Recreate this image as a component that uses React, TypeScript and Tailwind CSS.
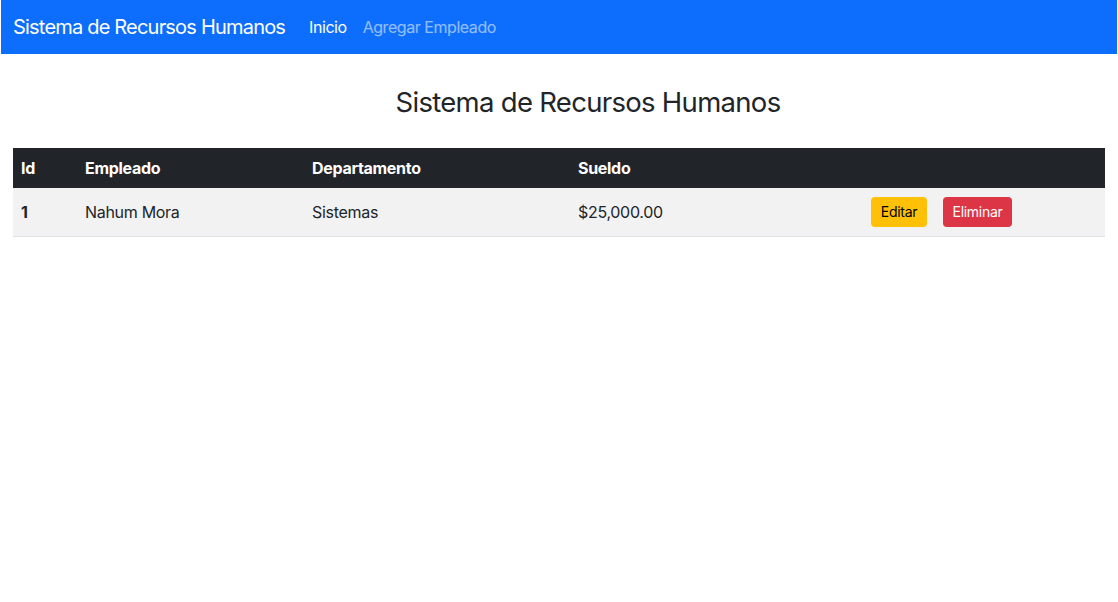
export default function App() {
  return (
    <div className="min-h-[602px] bg-white font-['Inter','Noto_Sans',sans-serif] text-[#212529]">
      {/* Navbar */}
      <nav className="ml-px mr-px flex h-[54px] items-center bg-[#0d6efd] px-3">
        <span className="mr-6 text-[20px] tracking-[-0.8px] text-white">Sistema de Recursos Humanos</span>
        <div className="flex items-center gap-4 text-[16px] tracking-[-0.45px]">
          <span className="text-white">Inicio</span>
          <span className="text-white/55">Agregar Empleado</span>
        </div>
      </nav>

      <div className="px-[13px]">
        {/* Title */}
        <div className="mt-[32px] mb-[29px] pl-[58px] text-center text-[27.5px] leading-[33px] tracking-[-0.7px]">
          Sistema de Recursos Humanos
        </div>

        {/* Table */}
        <table className="w-[1092px] border-collapse text-[16px] tracking-[-0.3px]">
          <thead>
            <tr className="h-[40px] bg-[#212529] text-left font-bold text-white">
              <th className="w-[64px] px-2">Id</th>
              <th className="w-[227px] px-2">Empleado</th>
              <th className="w-[266px] px-2">Departamento</th>
              <th className="w-[293px] px-2">Sueldo</th>
              <th className="px-2"></th>
            </tr>
          </thead>
          <tbody>
            <tr className="h-[48px] border-b border-[#dee2e6] bg-[#f2f2f2]">
              <th className="px-2 text-left font-bold">1</th>
              <td className="px-2">Nahum Mora</td>
              <td className="px-2">Sistemas</td>
              <td className="px-2">$25,000.00</td>
              <td className="px-2">
                <div className="flex items-center gap-4">
                  <button className="h-[30px] w-[56px] rounded-[4px] bg-[#ffc107] text-[14px] text-black">Editar</button>
                  <button className="h-[30px] w-[69px] rounded-[4px] bg-[#dc3545] text-[14px] text-white">Eliminar</button>
                </div>
              </td>
            </tr>
          </tbody>
        </table>
      </div>
    </div>
  );
}
